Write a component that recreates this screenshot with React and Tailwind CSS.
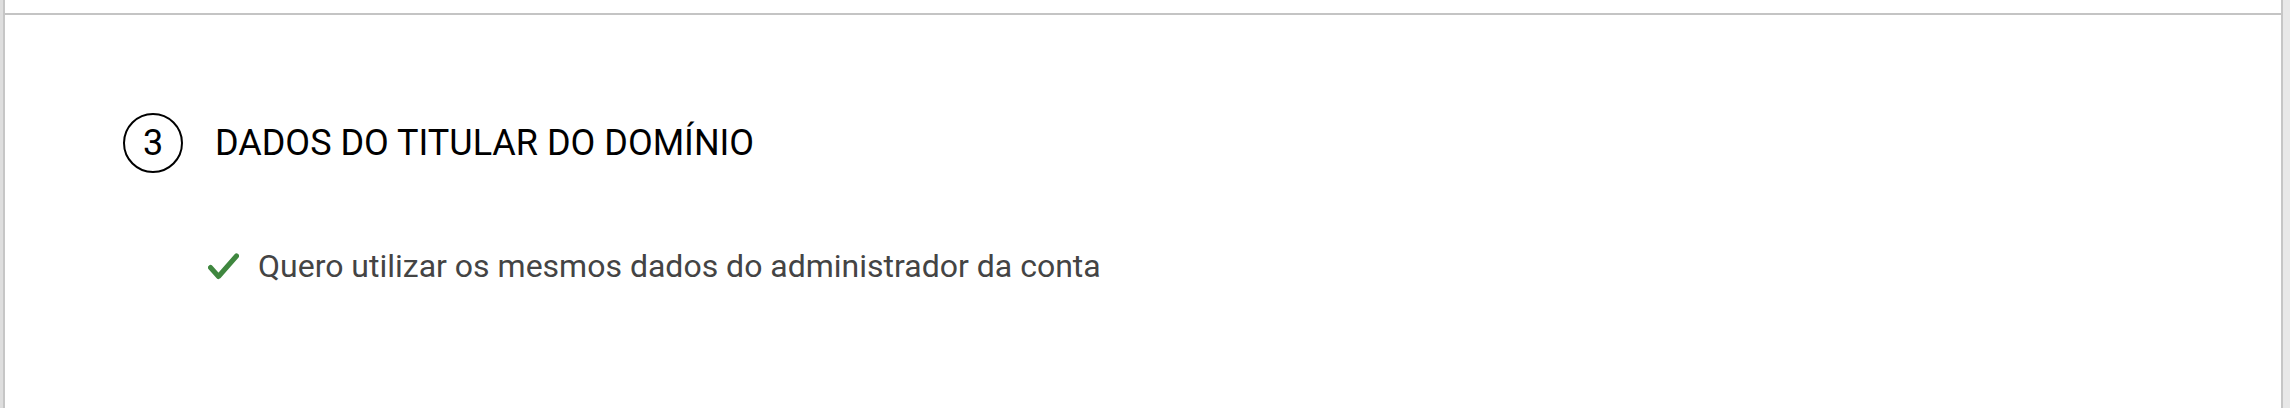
export default function App() {
  return (
    <div className="flex h-[408px] w-full bg-white font-['Roboto',sans-serif]">
      {/* left gutter */}
      <div className="w-[3px] bg-[#dedede]" />

      <div className="flex flex-1 flex-col border-x-2 border-[#c6c6c6] bg-white">
        {/* bottom edge of previous section */}
        <div className="h-[13px]" />
        <div className="h-[2px] bg-[#c4c4c4]" />

        {/* STEP 3 */}
        <div className="pl-[118px] pt-[98px]">
          <div className="flex items-center">
            <div className="flex h-[60px] w-[60px] items-center justify-center rounded-full border-2 border-black text-[36px] leading-none text-black">
              3
            </div>
            <h2 className="ml-[32px] text-[36px] leading-none text-black">DADOS DO TITULAR DO DOMÍNIO</h2>
          </div>

          <div className="ml-[85px] mt-[73px] flex h-[40px] items-center">
            <svg width="31" height="27" viewBox="0 0 31 27" fill="none">
              <path d="M2.5 14.5 L10.5 23.5 L28.5 3" stroke="#3f873f" strokeWidth="5" strokeLinecap="round" strokeLinejoin="round" />
            </svg>
            <span className="ml-[19px] text-[32px] leading-none text-[#444444]">
              Quero utilizar os mesmos dados do administrador da conta
            </span>
          </div>
        </div>
      </div>

      {/* right gutter */}
      <div className="w-[7px] bg-[#e8e8e8]" />
    </div>
  );
}
